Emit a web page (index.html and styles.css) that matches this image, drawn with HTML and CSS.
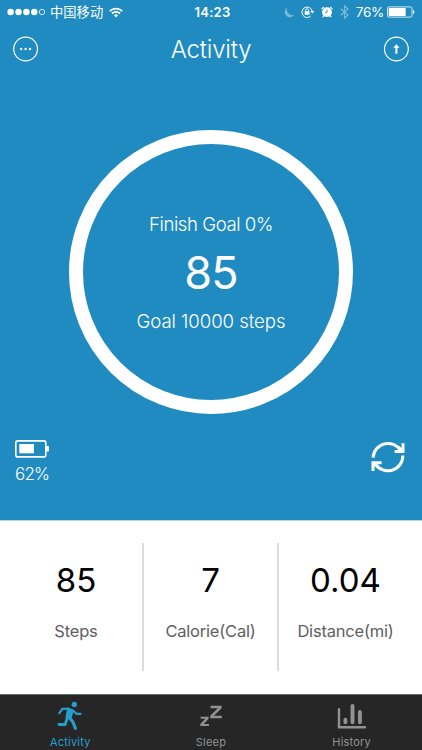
FILE: index.html
```
<!DOCTYPE html>
<html lang="en">
<head>
  <meta charset="UTF-8" />
  <meta name="viewport" content="width=device-width, initial-scale=1" />
  <title>Activity</title>
  <link rel="stylesheet" href="styles.css">
</head>
<body>
  <div class="app">
    <main class="tracker">
      <div class="status-bar">
        <div class="status-left">
          <svg class="signal" width="38" height="8" viewBox="0 0 38 8" fill="#fff">
            <circle cx="3.6" cy="4" r="3.2" /><circle cx="11.5" cy="4" r="3.2" />
            <circle cx="19.4" cy="4" r="3.2" /><circle cx="27.3" cy="4" r="3.2" />
            <circle cx="35" cy="4" r="2.7" fill="none" stroke="#fff" stroke-width=".8" />
          </svg>
          <span class="carrier">中国移动</span>
          <svg width="14" height="11" viewBox="0 0 14 11" fill="none" stroke="#fff" stroke-width="1.8">
            <path d="M.8 4.1a8.8 8.8 0 0 1 12.4 0" />
            <path d="M3 6.5a5.6 5.6 0 0 1 8 0" />
            <path d="M4.9 8.3a3 3 0 0 1 4.2 0L7 10.4z" fill="#fff" stroke="none" />
          </svg>
        </div>
        <span class="clock">14:23</span>
        <div class="status-right">
          <svg class="dim" width="11" height="11" viewBox="0 0 11 11" fill="#fff">
            <path d="M3.4.5A5.2 5.2 0 1 0 10.5 7.6 5.3 5.3 0 0 1 3.4.5z" />
          </svg>
          <svg class="lock" width="14" height="12" viewBox="0 0 14 12" fill="none" stroke="#fff">
            <path d="M9.7 10.1A5.2 5.2 0 1 1 11.2 5" stroke-width="1" />
            <path d="M9.1 5h4.3l-2.1 2.6z" fill="#fff" stroke="none" />
            <path d="M4.7 5.6V4.2a1.4 1.4 0 0 1 2.8 0v1.4" stroke-width=".9" />
            <rect x="3.7" y="5.2" width="4.8" height="3.6" rx=".4" fill="#fff" stroke="none" />
          </svg>
          <svg class="alarm" width="12" height="12" viewBox="0 0 12 12">
            <circle cx="6" cy="6.2" r="4.9" fill="#fff" />
            <path d="M1 2.8 2.6 1.3M11 2.8 9.4 1.3M2.7 10 2 10.9M9.3 10l.7.9" stroke="#fff" stroke-width="1.2" stroke-linecap="round" />
            <path d="M6.1 3.6v2.8H4" fill="none" stroke="#208bc0" stroke-width=".8" />
          </svg>
          <svg class="dim" width="9" height="14" viewBox="0 0 9 14" fill="none" stroke="#fff" stroke-width="1.2">
            <path d="M.7 3.8 8 10 4.5 13.2V.8L8 4 .7 10.2" />
          </svg>
          <span class="percent">76%</span>
          <svg class="power" width="28" height="12" viewBox="0 0 28 12">
            <rect x=".5" y=".9" width="24.5" height="10.2" rx="1.5" fill="none" stroke="#fff" stroke-width=".8" />
            <rect x="1.7" y="2" width="17" height="8" rx=".5" fill="#fff" />
            <path d="M26 4.1a2 2 0 0 1 0 3.8z" fill="#fff" />
          </svg>
        </div>
      </div>

      <header class="navbar">
        <svg width="26" height="26" viewBox="0 0 26 26" fill="#fff">
          <circle cx="12.6" cy="13" r="11.9" fill="none" stroke="#fff" stroke-width="1.2" />
          <circle cx="8.2" cy="13" r="1.2" /><circle cx="12.6" cy="13" r="1.2" /><circle cx="17" cy="13" r="1.2" />
        </svg>
        <h1 class="title">Activity</h1>
        <svg width="26" height="26" viewBox="0 0 26 26">
          <circle cx="13.4" cy="13" r="11.9" fill="none" stroke="#fff" stroke-width="1.2" />
          <path d="M13.4 8.2 16.6 11.8H14.4v5.9h-2v-5.9h-2.2z" fill="#fff" />
        </svg>
      </header>

      <section class="ring">
        <p class="ring-text finish">Finish Goal 0%</p>
        <p class="ring-count">85</p>
        <p class="ring-text">Goal 10000 steps</p>
      </section>

      <div class="device">
        <div class="band-battery">
          <svg width="35" height="18" viewBox="0 0 35 18">
            <rect x=".8" y=".9" width="30" height="16" rx="2" fill="none" stroke="#fff" stroke-width="1.6" />
            <rect x="4.3" y="4" width="14.6" height="9.3" fill="#fff" />
            <rect x="31" y="6" width="3" height="5.6" rx=".8" fill="#fff" />
          </svg>
          <span class="band-level">62%</span>
        </div>
        <svg class="sync" width="34" height="34" viewBox="0 0 34 34" fill="none" stroke="#fff" stroke-width="3">
          <path d="M2.1 17.6A15 15 0 0 1 30 10.8" />
          <path d="M31.9 15.6A15 15 0 0 1 4 23.4" />
          <path d="M32 3.3V11.4H23.6" />
          <path d="M2 31V22.8H10.6" />
          <path d="M27.5 7.5 32 11.4M6.5 26.7 2 22.8" />
        </svg>
      </div>
    </main>

    <section class="stats">
      <div class="stat">
        <span class="stat-value">85</span>
        <span class="stat-label">Steps</span>
      </div>
      <div class="stat">
        <span class="stat-value">7</span>
        <span class="stat-label">Calorie(Cal)</span>
      </div>
      <div class="stat">
        <span class="stat-value">0.04</span>
        <span class="stat-label">Distance(mi)</span>
      </div>
    </section>

    <nav class="tabs">
      <a class="tab active">
        <svg width="26" height="30" viewBox="0 0 26 30" fill="none" stroke="currentColor" stroke-linejoin="round" stroke-linecap="round">
          <circle cx="17.3" cy="3.5" r="2.7" fill="currentColor" stroke="none" />
          <path d="M2.3 12.2 5.3 7.8 11 7.6l5.3 2.2 3 3h4.2" stroke-width="2.2" />
          <path d="M10.8 7.6 15.8 9.8 13.6 17.3 9.4 16.6z" fill="currentColor" stroke-width="1.8" />
          <path d="M10.4 16.5 8.2 23.5H2" stroke-width="2.8" />
          <path d="M11.9 16.4 15.8 20.8 18.4 27.4" stroke-width="3.1" />
        </svg>
        <span>Activity</span>
      </a>
      <a class="tab">
        <svg width="26" height="30" viewBox="0 0 26 30" fill="currentColor">
          <path d="M12.6 4.8H23.6V7.2L15.9 14.8H23.8V17.2H12.2V14.8L19.8 7.2H12.6z" />
          <path d="M2.6 15.8H10.6V17.8L5.7 23H10.9V25H2.3V23L7.3 17.8H2.6z" />
        </svg>
        <span>Sleep</span>
      </a>
      <a class="tab">
        <svg width="30" height="30" viewBox="0 0 30 30" fill="none" stroke="currentColor" stroke-linecap="round">
          <path d="M2 8.3V26.2H28" stroke-width="2.4" />
          <path d="M8.4 18.8v2.4M15.5 5v16.2M22.9 11v10.2" stroke-width="3.9" />
        </svg>
        <span>History</span>
      </a>
    </nav>
  </div>
</body>
</html>
```
FILE: styles.css
```
* {
  box-sizing: border-box;
}
body {
  margin: 0;
  font-family: Inter, "Noto Sans CJK SC", sans-serif;
  color: #fff;
}
h1, p {
  margin: 0;
  white-space: nowrap;
}
svg {
  display: block;
  flex: none;
}
.app {
  display: flex;
  flex-direction: column;
  width: 422px;
  height: 750px;
  overflow: hidden;
  background: #fff;
}

/* blue area */
.tracker {
  display: flex;
  flex-direction: column;
  align-items: center;
  height: 520px;
  background: #208bc0;
}
.status-bar {
  display: grid;
  grid-template-columns: 1fr auto 1fr;
  align-items: center;
  width: 100%;
  height: 24px;
  padding: 0 7px;
  font-size: 13px;
  line-height: 24px;
}
.status-left,
.status-right {
  display: flex;
  align-items: center;
}
.carrier {
  margin: 0 6px 0 5px;
  font-size: 13.3px;
}
.clock {
  padding-left: 3px;
  font-weight: 600;
  letter-spacing: 0.3px;
}
.status-right {
  justify-content: flex-end;
}
.dim {
  opacity: 0.4;
}
.lock {
  margin-left: 6px;
}
.alarm {
  margin: 0 7px 0 6px;
}
.percent {
  margin: 0 3px 0 7px;
  font-size: 13.5px;
  letter-spacing: -0.3px;
}
.navbar {
  display: flex;
  align-items: center;
  justify-content: space-between;
  width: 100%;
  height: 50px;
  padding: 0 13px;
}
.title {
  padding-top: 2px;
  font-size: 24px;
  font-weight: 300;
  line-height: 48px;
  letter-spacing: -0.2px;
}

/* goal ring */
.ring {
  display: flex;
  flex-direction: column;
  align-items: center;
  width: 284px;
  height: 284px;
  margin-top: 56px;
  padding-top: 67px;
  border: 14px solid #fff;
  border-radius: 50%;
}
.ring-text {
  font-size: 18.6px;
  font-weight: 300;
  line-height: 26px;
  letter-spacing: -0.05px;
}
.finish {
  letter-spacing: -0.45px;
}
.ring-count {
  margin: 10px 0;
  font-size: 45px;
  line-height: 51px;
  letter-spacing: -0.8px;
}

.device {
  display: flex;
  justify-content: space-between;
  width: 100%;
  margin-top: 26px;
  padding: 0 17px 0 15px;
}
.band-level {
  display: block;
  margin-top: 5px;
  font-size: 17px;
  font-weight: 300;
  line-height: 22px;
  letter-spacing: -0.8px;
}

/* daily totals */
.stats {
  display: grid;
  grid-template-columns: 134px 135px 135px;
  height: 174px;
  padding: 22px 9px 23px 8px;
  color: #000;
  border-top: 1px solid #b9d9e9;
}
.stat {
  display: flex;
  flex-direction: column;
  align-items: center;
}
.stat:first-child {
  padding-left: 2px;
}
.stat + .stat {
  border-left: 2px solid #dcdcdc;
}
.stat-value {
  margin-top: 17px;
  font-size: 33px;
  line-height: 40px;
}
.stat-label {
  margin-top: 20px;
  font-size: 16.5px;
  line-height: 22px;
  letter-spacing: -0.2px;
  color: #606060;
}

/* bottom tabs */
.tabs {
  display: flex;
  height: 56px;
  background: #262626;
  border-top: 1px solid #686868;
}
.tab {
  display: flex;
  flex: 1;
  flex-direction: column;
  align-items: center;
  padding-top: 6px;
  font-size: 11px;
  line-height: 14px;
  letter-spacing: 0.2px;
  color: #929292;
}
.tab span {
  margin-top: 4px;
}
.tab.active {
  color: #259fcd;
}
```
